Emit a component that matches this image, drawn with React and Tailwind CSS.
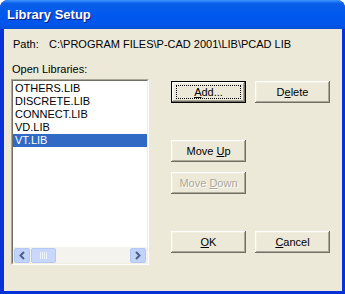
import React from "react";

const libs = ["OTHERS.LIB", "DISCRETE.LIB", "CONNECT.LIB", "VD.LIB", "VT.LIB"];

const bevel =
  "shadow-[inset_-1px_-1px_#716f64,inset_1px_1px_#ffffff,inset_-2px_-2px_#aca899,inset_2px_2px_#f1efe2]";

function Btn({ children, isDefault, disabled }) {
  return (
    <div
      className={`w-[75px] h-[22px] flex items-center justify-center bg-[#ece9d8] ${
        isDefault ? "border border-black" : ""
      } ${bevel} ${disabled ? "text-[#aca899] [text-shadow:1px_1px_#ffffff]" : "text-black"}`}
    >
      {isDefault ? (
        <div className="w-[65px] h-[14px] border border-dotted border-black flex items-center justify-center">
          {children}
        </div>
      ) : (
        children
      )}
    </div>
  );
}

function Arrow({ dir }) {
  return (
    <svg width="8" height="9" viewBox="0 0 8 9">
      <path
        d={dir === "left" ? "M6 1 L2.5 4.5 L6 8" : "M2 1 L5.5 4.5 L2 8"}
        fill="none"
        stroke="#4d6185"
        strokeWidth="2"
      />
    </svg>
  );
}

export default function App() {
  return (
    <div className="w-[345px] h-[294px] bg-white">
      <div className="w-[345px] h-[294px] flex flex-col rounded-t-[8px] bg-[#0831d9] overflow-hidden font-['Liberation_Sans',sans-serif] text-[11px]">
        <div className="h-[29px] shrink-0 flex items-center pl-[7px] bg-[linear-gradient(to_bottom,#3d95ff_0%,#0a5fe8_12%,#0058ee_50%,#0055ea_85%,#0a4fd6_100%)]">
          <span className="text-white font-bold text-[13px] font-['Liberation_Sans',sans-serif] [text-shadow:1px_1px_#0a1883]">
            Library Setup
          </span>
        </div>
        <div className="flex-1 ml-[4px] mr-[3px] mb-[3px] bg-[#ece9d8] pl-[7px] pt-[9px] flex flex-col">
          <div className="flex h-[13px] items-center pl-[2px]">
            <span className="w-[36px]">Path:</span>
            <span>C:\PROGRAM FILES\P-CAD 2001\LIB\PCAD LIB</span>
          </div>
          <div className="mt-[12px] h-[13px] flex items-center pl-[1px]">Open Libraries:</div>
          <div className="flex mt-[3px]">
            <div className="w-[138px] h-[186px] bg-white border border-[#aca899] border-b-white border-r-white">
              <div className="w-full h-full flex flex-col border border-[#716f64] border-b-[#f1efe2] border-r-[#f1efe2]">
                <div className="flex-1 flex flex-col pt-[1px]">
                  {libs.map((l, i) => (
                    <div
                      key={l}
                      className={`h-[13px] leading-[13px] pl-[2px] ${
                        i === 4 ? "bg-[#316ac5] text-white" : "text-black"
                      }`}
                    >
                      {l}
                    </div>
                  ))}
                </div>
                <div className="h-[16px] flex items-center bg-[#f4f3ee] px-[1px] gap-[1px]">
                  <div className="w-[16px] h-[15px] rounded-[2px] bg-[#c1d3fb] border border-[#b4c8f6] flex items-center justify-center">
                    <Arrow dir="left" />
                  </div>
                  <div className="w-[25px] h-[15px] rounded-[2px] bg-[#c8d7fb] border border-[#b4c8f6] flex items-center justify-center gap-[1px]">
                    {[0, 1, 2, 3].map((k) => (
                      <div key={k} className="w-[1px] h-[7px] bg-[#eef4fe]" />
                    ))}
                  </div>
                  <div className="flex-1" />
                  <div className="w-[16px] h-[15px] rounded-[2px] bg-[#c1d3fb] border border-[#b4c8f6] flex items-center justify-center">
                    <Arrow dir="right" />
                  </div>
                </div>
              </div>
            </div>
            <div className="ml-[22px] pt-[2px] flex flex-col">
              <div className="flex gap-[9px]">
                <Btn isDefault>
                  <span><u>A</u>dd...</span>
                </Btn>
                <Btn>
                  <span>D<u>e</u>lete</span>
                </Btn>
              </div>
              <div className="mt-[37px]">
                <Btn>
                  <span>Move <u>U</u>p</span>
                </Btn>
              </div>
              <div className="mt-[10px]">
                <Btn disabled>
                  <span>Move <u>D</u>own</span>
                </Btn>
              </div>
              <div className="mt-[37px] flex gap-[9px]">
                <Btn>
                  <span><u>O</u>K</span>
                </Btn>
                <Btn>
                  <span><u>C</u>ancel</span>
                </Btn>
              </div>
            </div>
          </div>
        </div>
      </div>
    </div>
  );
}
